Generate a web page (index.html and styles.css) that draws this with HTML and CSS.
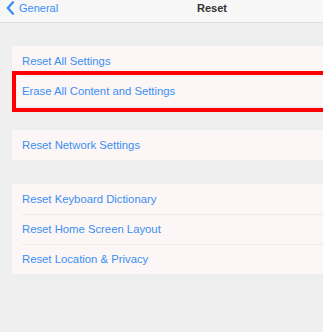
FILE: index.html
```html
<!DOCTYPE html>
<html lang="en">
<head>
  <meta charset="UTF-8">
  <meta name="viewport" content="width=device-width, initial-scale=1.0">
  <title>Reset</title>
  <link rel="stylesheet" href="styles.css">
</head>
<body>
  <div class="navbar">
    <a class="back" href="#">
      <svg class="chevron" width="9" height="14" viewBox="0 0 9 14">
        <path d="M7 1.2 L1.8 7 L7 12.8" fill="none" stroke="#2f8cf4" stroke-width="2.2" stroke-linecap="round" stroke-linejoin="round"/>
      </svg>
      <span>General</span>
    </a>
    <div class="title">Reset</div>
  </div>

  <div class="content">
    <div class="group">
      <div class="row">Reset All Settings</div>
      <div class="row highlighted">Erase All Content and Settings</div>
    </div>

    <div class="group">
      <div class="row">Reset Network Settings</div>
    </div>

    <div class="group">
      <div class="row">Reset Keyboard Dictionary</div>
      <div class="row">Reset Home Screen Layout</div>
      <div class="row">Reset Location &amp; Privacy</div>
    </div>
  </div>
</body>
</html>
```

FILE: styles.css
```css
* {
  box-sizing: border-box;
  margin: 0;
  padding: 0;
}

body {
  font-family: "Liberation Sans", Arial, sans-serif;
  background: #efefef;
  width: 323px;
  height: 332px;
  overflow: hidden;
}

.navbar {
  height: 23px;
  display: grid;
  grid-template-columns: 197px auto;
  align-items: center;
  background: #f7f7f7;
  border-bottom: 1px solid #dedede;
  padding-bottom: 6px;
}

.back {
  display: flex;
  align-items: center;
  gap: 4px;
  padding-left: 6px;
  color: #3a8ff2;
  text-decoration: none;
  font-size: 11px;
}

.chevron {
  display: block;
}

.title {
  font-size: 11px;
  font-weight: bold;
  color: #333;
}

.content {
  padding: 23px 0 0 12px;
  overflow: hidden;
}

.group {
  background: #fdf6f6;
  border-radius: 3px 0 0 3px;
  margin-bottom: 24px;
}

.row {
  position: relative;
  height: 30px;
  line-height: 30px;
  padding-left: 10px;
  font-size: 11.3px;
  color: #3a8ff2;
}

.row + .row::before {
  content: "";
  position: absolute;
  left: 10px;
  right: 0;
  top: 0;
  border-top: 1px solid #ececec;
}

.row.highlighted::after {
  content: "";
  position: absolute;
  left: 0;
  right: -10px;
  top: -5px;
  bottom: -6px;
  border: 4px solid #ff0000;
}
```
